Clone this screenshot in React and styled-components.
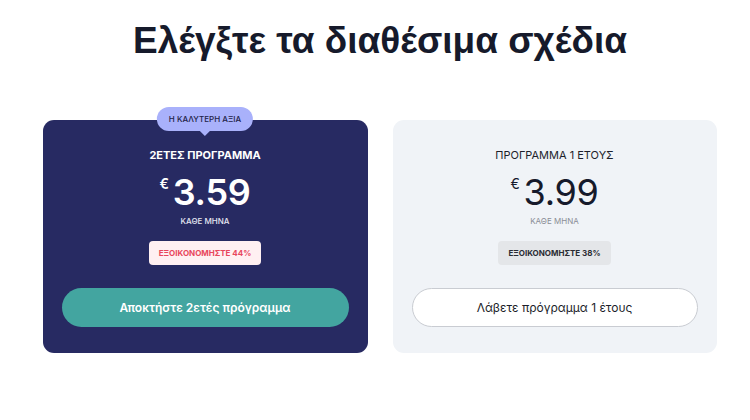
import React from "react";
import styled, { createGlobalStyle } from "styled-components";

const GlobalStyle = createGlobalStyle`
  html, body {
    margin: 0;
    padding: 0;
    background: #ffffff;
  }
  body {
    font-family: Inter, "Noto Sans", sans-serif;
  }
`;

const plans = [
  {
    id: "two-year",
    featured: true,
    badge: "Η ΚΑΛΥΤΕΡΗ ΑΞΙΑ",
    title: "2ΕΤΕΣ ΠΡΟΓΡΑΜΜΑ",
    price: "3.59",
    period: "ΚΑΘΕ ΜΗΝΑ",
    save: "ΕΞΟΙΚΟΝΟΜΗΣΤΕ 44%",
    cta: "Αποκτήστε 2ετές πρόγραμμα",
  },
  {
    id: "one-year",
    featured: false,
    title: "ΠΡΟΓΡΑΜΜΑ 1 ΕΤΟΥΣ",
    price: "3.99",
    period: "ΚΑΘΕ ΜΗΝΑ",
    save: "ΕΞΟΙΚΟΝΟΜΗΣΤΕ 38%",
    cta: "Λάβετε πρόγραμμα 1 έτους",
  },
];

export default function App() {
  return (
    <>
      <GlobalStyle />
      <Page>
        <Heading>Ελέγξτε τα διαθέσιμα σχέδια</Heading>
        <Cards>
          {plans.map((plan) => (
            <Card key={plan.id} $featured={plan.featured}>
              {plan.badge && <Badge>{plan.badge}</Badge>}
              <PlanTitle $featured={plan.featured}>{plan.title}</PlanTitle>
              <Price $featured={plan.featured}>
                <Currency>€</Currency>
                {plan.price}
              </Price>
              <Period $featured={plan.featured}>{plan.period}</Period>
              <Save $featured={plan.featured}>{plan.save}</Save>
              <Button $featured={plan.featured}>{plan.cta}</Button>
            </Card>
          ))}
        </Cards>
      </Page>
    </>
  );
}

const Page = styled.div`
  width: 750px;
  height: 420px;
  display: flex;
  flex-direction: column;
  align-items: center;
  box-sizing: border-box;
  padding: 16px 0 0 10px;
`;

const Heading = styled.h1`
  margin: 0;
  font-family: "Liberation Sans", Arial, sans-serif;
  font-weight: 700;
  font-size: 37px;
  line-height: 50px;
  color: #161a2b;
`;

const Cards = styled.div`
  display: grid;
  grid-template-columns: 325px 324px;
  gap: 25px;
  margin-top: 54px;
  margin-left: -1px;
`;

const Card = styled.div`
  position: relative;
  display: flex;
  flex-direction: column;
  align-items: center;
  box-sizing: border-box;
  height: 233px;
  padding: 28px 19px 0;
  border-radius: 11px;
  background: ${(p) => (p.$featured ? "#272a62" : "#f0f3f7")};
`;

const Badge = styled.div`
  position: absolute;
  top: -13px;
  left: 50%;
  transform: translateX(-50%);
  height: 24px;
  padding: 0 12px;
  display: flex;
  align-items: center;
  border-radius: 12px;
  background: #a9b1fb;
  color: #1e2246;
  font-size: 8px;
  font-weight: 500;
  white-space: nowrap;

  &::after {
    content: "";
    position: absolute;
    left: 50%;
    bottom: -5px;
    margin-left: -5px;
    border-left: 5px solid transparent;
    border-right: 5px solid transparent;
    border-top: 5px solid #a9b1fb;
  }
`;

const PlanTitle = styled.div`
  font-size: 11px;
  line-height: 14px;
  font-weight: ${(p) => (p.$featured ? 700 : 400)};
  color: ${(p) => (p.$featured ? "#ffffff" : "#1d1f2b")};
`;

const Price = styled.div`
  display: flex;
  align-items: flex-start;
  gap: 4px;
  margin-top: 11px;
  font-size: 36px;
  line-height: 38px;
  font-weight: ${(p) => (p.$featured ? 600 : 400)};
  color: ${(p) => (p.$featured ? "#ffffff" : "#161a2b")};
  letter-spacing: -0.3px;
`;

const Currency = styled.span`
  margin-top: 4px;
  font-size: 14px;
  line-height: 14px;
`;

const Period = styled.div`
  margin-top: 5px;
  font-size: 8px;
  line-height: 10px;
  font-weight: ${(p) => (p.$featured ? 500 : 400)};
  color: ${(p) => (p.$featured ? "#e6e7f2" : "#8a8d96")};
`;

const Save = styled.div`
  margin-top: 15px;
  height: 24px;
  padding: 0 10px;
  display: flex;
  align-items: center;
  border-radius: 4px;
  font-size: 8px;
  font-weight: 700;
  background: ${(p) => (p.$featured ? "#fff0f2" : "#e4e6e9")};
  color: ${(p) => (p.$featured ? "#e8475d" : "#2a2c33")};
`;

const Button = styled.button`
  margin-top: 23px;
  width: 100%;
  height: 39px;
  border-radius: 20px;
  font-family: Inter, "Noto Sans", sans-serif;
  font-size: 12px;
  cursor: pointer;
  box-sizing: border-box;
  font-weight: ${(p) => (p.$featured ? 600 : 400)};
  background: ${(p) => (p.$featured ? "#43a5a0" : "#ffffff")};
  color: ${(p) => (p.$featured ? "#ffffff" : "#1d1f2b")};
  border: ${(p) => (p.$featured ? "none" : "1px solid #c9ccd2")};
`;
